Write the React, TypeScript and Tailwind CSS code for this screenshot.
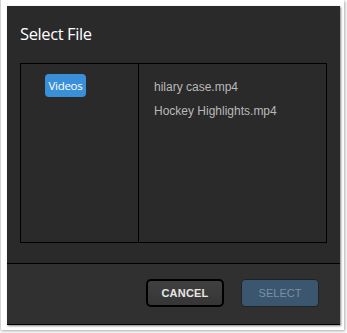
import React from 'react';

const FILES = ['hilary case.mp4', 'Hockey Highlights.mp4'];

export default function App() {
  return (
    <div className="h-[333px] w-[347px] bg-white">
      <div className="h-[330px] w-[344px] border-l border-[#d4d4d4] bg-white pl-[6px] pt-[6px] shadow-[1px_1px_3px_rgba(0,0,0,0.35)]">
        <div className="flex h-[319px] w-[333px] flex-col border-b border-black bg-[#2a2a2a] shadow-[1px_1px_2px_rgba(0,0,0,0.5)]">
          {/* header */}
          <div className="flex h-[57px] items-center px-[13px] pb-[1px]">
            <h1 className="font-['Open_Sans',sans-serif] text-[16.5px] leading-none tracking-[-0.4px] text-white">
              Select File
            </h1>
          </div>

          {/* picker */}
          <div className="mx-[13px] flex h-[180px] border border-black">
            <div className="w-[118px] border-r border-black pl-[24px] pt-[10px]">
              <button className="flex h-[23px] w-[41px] items-center justify-center rounded-[4px] bg-[#3a90d8] font-['Open_Sans',sans-serif] text-[11.5px] tracking-[-0.3px] text-white">
                Videos
              </button>
            </div>
            <div className="flex flex-col gap-[10px] pl-[15px] pt-[16px] font-['Liberation_Sans',Arial,sans-serif] text-[12px] leading-[14px] text-[#b9b9b9]">
              {FILES.map((f) => (
                <span key={f}>{f}</span>
              ))}
            </div>
          </div>

          {/* footer */}
          <div className="mt-[20px] flex flex-1 items-start justify-end gap-[17px] border-t border-black bg-[#303030] pr-[21px] pt-[15px]">
            <button className="flex h-[28px] w-[78px] items-center justify-center rounded-[5px] border-2 border-black bg-[linear-gradient(180deg,#404040_0%,#363636_100%)] font-['Liberation_Sans',Arial,sans-serif] text-[11px] font-bold tracking-[0.2px] text-[#e6e6e6]">
              CANCEL
            </button>
            <button className="flex h-[28px] w-[78px] items-center justify-center rounded-[4px] border border-[#222] bg-[#3b566f] font-['Liberation_Sans',Arial,sans-serif] text-[11px] text-[#7d90a2]">
              SELECT
            </button>
          </div>
        </div>
      </div>
    </div>
  );
}
